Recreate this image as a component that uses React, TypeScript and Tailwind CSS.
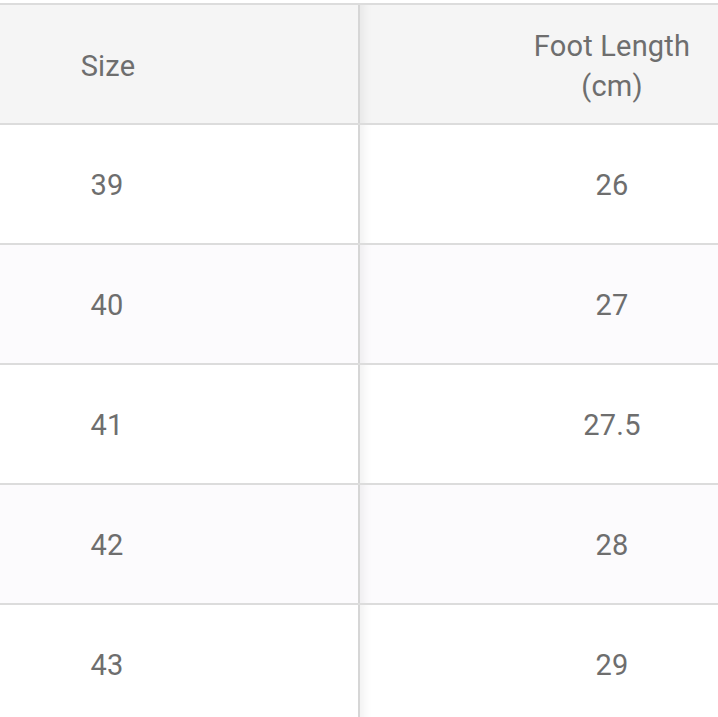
const rows = [
  { size: '39', length: '26' },
  { size: '40', length: '27' },
  { size: '41', length: '27.5' },
  { size: '42', length: '28' },
  { size: '43', length: '29' },
];

export default function App() {
  return (
    <main
      className="w-[718px] h-[717px] overflow-hidden bg-white pt-[3px] text-[#6e6e6e] text-[29px] leading-[40px] tracking-[0.2px]"
      style={{ fontFamily: 'Roboto, "Noto Sans", sans-serif' }}
    >
      <div className="border-t-2 border-[#dcdcdc]">
        {/* Header */}
        <div className="flex h-[120px] border-b-2 border-[#dcdcdc] bg-[#f5f5f5]">
          <div className="w-[360px] shrink-0 border-r-2 border-[#d6d6d6] flex items-center pt-[4px]">
            <div className="w-[216px] text-center">Size</div>
          </div>
          <div className="flex-1 flex items-center pt-[4px] shadow-[inset_12px_0_10px_-8px_rgba(0,0,0,0.06)]">
            <div className="ml-[162px] w-[180px] text-center">
              Foot Length
              <br />
              (cm)
            </div>
          </div>
        </div>

        {/* Rows */}
        {rows.map((row, i) => (
          <div
            key={row.size}
            className={`flex h-[120px] border-b-2 border-[#dcdcdc] ${
              i % 2 === 1 ? 'bg-[#fcfbfd]' : 'bg-white'
            }`}
          >
            <div className="w-[360px] shrink-0 border-r-2 border-[#d6d6d6] flex items-center pt-[2px]">
              <div className="w-[214px] text-center">{row.size}</div>
            </div>
            <div className="flex-1 flex items-center pt-[2px] shadow-[inset_12px_0_10px_-8px_rgba(0,0,0,0.06)]">
              <div className="ml-[162px] w-[180px] text-center">{row.length}</div>
            </div>
          </div>
        ))}
      </div>
    </main>
  );
}
